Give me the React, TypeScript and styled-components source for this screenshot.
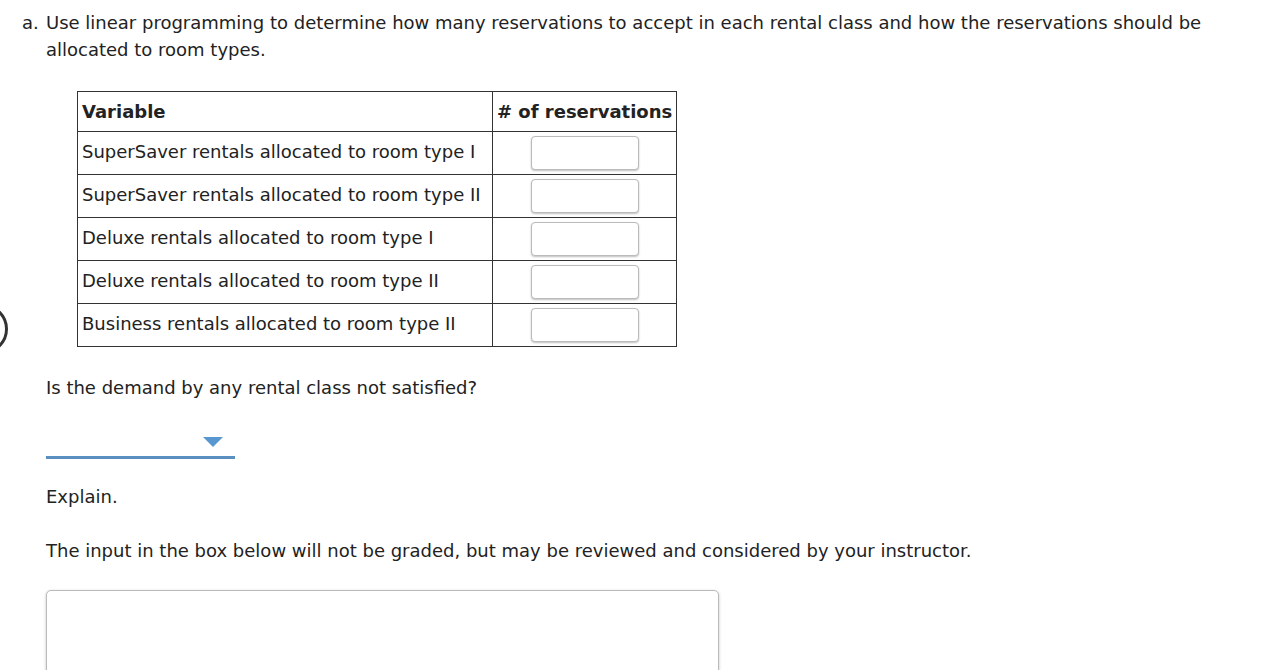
import * as React from 'react'
import styled, { createGlobalStyle } from 'styled-components'

const GlobalStyle = createGlobalStyle`
    html, body {
        margin: 0;
        padding: 0;
        background: #fff;
    }
    body {
        font-family: "DejaVu Sans", Verdana, sans-serif;
        font-size: 18px;
        color: #222;
    }
`

const Page = styled.div`
    position: relative;
    width: 1272px;
    height: 670px;
    overflow: hidden;
    padding: 9px 0 0 22px;
    box-sizing: border-box;
`
const Ring = styled.div`
    position: absolute;
    left: -42px;
    top: 304px;
    width: 44px;
    height: 44px;
    border: 3px solid #333;
    border-radius: 50%;
`
const Question = styled.div`
    display: flex;
    line-height: 27px;
`
const Label = styled.span`
    flex: 0 0 24px;
`
const Body = styled.div`
    flex: 1;
`
const Prompt = styled.p`
    margin: ${(p: { $top: number }) => p.$top}px 0 0;
    line-height: 22px;
`
const Table = styled.table`
    margin: 28px 0 0 31px;
    border-collapse: collapse;
    border: 1px solid #333;
    table-layout: fixed;
    width: 600px;
`
const HeadCell = styled.th`
    border: 1px solid #333;
    height: 38px;
    padding: 0 4px 1px;
    text-align: left;
    font-weight: bold;
    white-space: nowrap;
    overflow: hidden;
`
const Cell = styled.td`
    border: 1px solid #333;
    height: 39px;
    padding: 0 4px 3px;
    white-space: nowrap;
    text-align: ${(p: { $center?: boolean }) => (p.$center ? 'center' : 'left')};
`
const NumberInput = styled.input`
    display: block;
    margin: 2px auto 0;
    width: 108px;
    height: 34px;
    box-sizing: border-box;
    border: 1px solid #bbb;
    border-radius: 4px;
    box-shadow: 0 1px 2px rgba(0, 0, 0, 0.25);
    background: #fff;
`
const Dropdown = styled.div`
    margin-top: 29px;
    width: 189px;
    height: 31px;
    border-bottom: 3px solid #5a8fc2;
    display: flex;
    justify-content: flex-end;
    align-items: flex-start;
    padding: 9px 12px 0 0;
    box-sizing: border-box;
`
const Caret = styled.span`
    width: 0;
    height: 0;
    border-left: 10px solid transparent;
    border-right: 10px solid transparent;
    border-top: 10px solid #5897d0;
`
const TextBox = styled.textarea`
    display: block;
    margin-top: 28px;
    width: 673px;
    height: 120px;
    box-sizing: border-box;
    border: 1px solid #bbb;
    border-radius: 5px;
    box-shadow: 0 1px 3px rgba(0, 0, 0, 0.25);
    resize: none;
`

const rows = [
    'SuperSaver rentals allocated to room type I',
    'SuperSaver rentals allocated to room type II',
    'Deluxe rentals allocated to room type I',
    'Deluxe rentals allocated to room type II',
    'Business rentals allocated to room type II',
]

export default function App() {
    return (
        <Page>
            <GlobalStyle />
            <Ring />
            <Question>
                <Label>a.</Label>
                <Body>
                    Use linear programming to determine how many reservations to accept in each rental class
                    and how the reservations should be allocated to room types.
                    <Table>
                        <colgroup>
                            <col style={{ width: 415 }} />
                            <col style={{ width: 184 }} />
                        </colgroup>
                        <thead>
                            <tr>
                                <HeadCell>Variable</HeadCell>
                                <HeadCell># of reservations</HeadCell>
                            </tr>
                        </thead>
                        <tbody>
                            {rows.map((r) => (
                                <tr key={r}>
                                    <Cell>{r}</Cell>
                                    <Cell $center>
                                        <NumberInput type="text" />
                                    </Cell>
                                </tr>
                            ))}
                        </tbody>
                    </Table>
                    <Prompt $top={30}>Is the demand by any rental class not satisfied?</Prompt>
                    <Dropdown>
                        <Caret />
                    </Dropdown>
                    <Prompt $top={27}>Explain.</Prompt>
                    <Prompt $top={32}>
                        The input in the box below will not be graded, but may be reviewed and considered by your
                        instructor.
                    </Prompt>
                    <TextBox />
                </Body>
            </Question>
        </Page>
    )
}
